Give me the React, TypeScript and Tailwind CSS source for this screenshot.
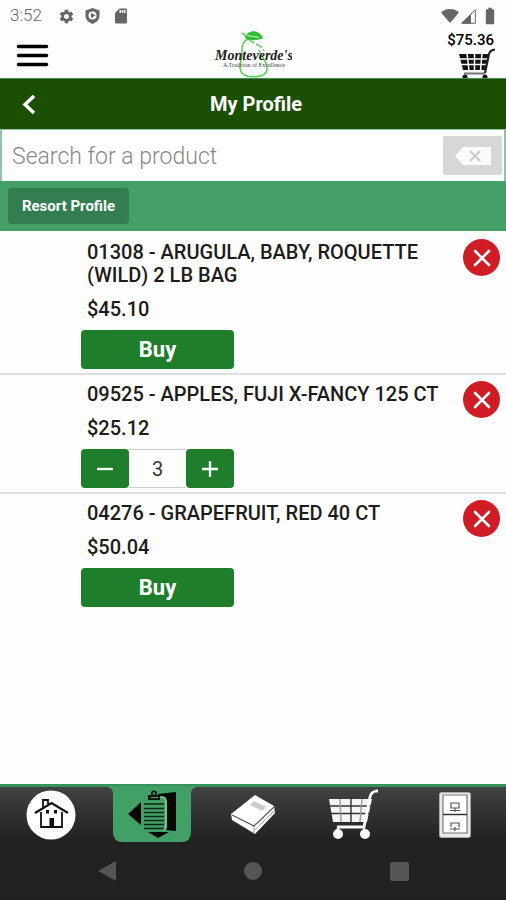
import { useState } from "react";
import { MdSettings, MdSdCard, MdBatteryFull } from "react-icons/md";

type Product = {
  code: string;
  name: string;
  price: string;
  qty: number;
};

const products: Product[] = [
  { code: "01308", name: "ARUGULA, BABY, ROQUETTE (WILD) 2 LB BAG", price: "$45.10", qty: 0 },
  { code: "09525", name: "APPLES, FUJI X-FANCY 125 CT", price: "$25.12", qty: 3 },
  { code: "04276", name: "GRAPEFRUIT, RED 40 CT", price: "$50.04", qty: 0 },
];

function StatusBar() {
  return (
    <div className="flex h-8 items-center justify-between pl-2.5 pr-1.5 text-[#666]">
      <div className="flex items-center">
        <span className="w-12 text-[17px] font-light">3:52</span>
        <MdSettings size={17} />
        <svg className="ml-2.5" width="15" height="16" viewBox="0 0 15 16">
          <path d="M7.500 0 14.500 2.500V7.500C14.500 11.500 11.500 14.500 7.500 16 3.500 14.500.5 11.500.5 7.500V2.500Z" fill="#666" />
          <circle cx="7.500" cy="7.500" r="4" fill="#fff" />
          <path d="M6 4.800 10.500 7.500 6 10.200Z" fill="#666" />
        </svg>
        <MdSdCard className="ml-3" size={18} />
      </div>
      <div className="flex items-center">
        <svg width="18" height="14" viewBox="0 0 18 14">
          <path d="M0 3.500C5-1.100 13-1.100 18 3.500L9 14Z" fill="#666" />
        </svg>
        <svg className="ml-0.5" width="15" height="15" viewBox="0 0 15 15">
          <path d="M14.300.8V14.300H.8Z" fill="#fff" stroke="#666" strokeWidth="1" />
          <path d="M10 5V14.500H.5Z" fill="#666" />
        </svg>
        <MdBatteryFull className="ml-1" size={20} />
      </div>
    </div>
  );
}

function Logo() {
  return (
    <svg width="78" height="48" viewBox="0 0 78 48" role="img" aria-label="Monteverde's">
      <g fill="none" stroke="#55d055" strokeWidth="1.500">
        <path d="M37 8C27 10 28 18 28 23 28 28 26 32 26 37 26 44 32 46.800 40 46.800 49 46.800 54 43 53 37 53 31 47 27 45 20" />
        <path d="M28 3C32 5 34 9 38 12 43 14 49 17 50 21" strokeDasharray="7 2" />
      </g>
      <path d="M31 8C33 0 44-2 49 8 43 11 35 11 31 8Z" fill="#2fbd35" />
      <path d="M33 5.500 45 7.500" stroke="#c5f2c5" strokeWidth="1.200" />
      <text x="40" y="30" textAnchor="middle" fontFamily="Liberation Serif, serif" fontStyle="italic" fontWeight="bold" fontSize="14" fill="#222">Monteverde's</text>
      <text x="40" y="37" textAnchor="middle" fontFamily="Liberation Serif, serif" fontSize="6" fill="#444">A Tradition of Excellence</text>
    </svg>
  );
}

function HeaderCart() {
  return (
    <svg width="38" height="31" viewBox="0 0 38 31">
      <path d="M1 6H31L28 22H5Z" fill="#111" />
      <path d="M0 11H33M2 16.500H32M9 5 11 23M16.500 5V23M24 5 22.500 23" stroke="#fff" strokeWidth="1.500" />
      <path d="M37 1.500Q32 2 31 6L27 25" fill="none" stroke="#222" strokeWidth="2.200" />
      <path d="M6 25.500H27" stroke="#77717a" strokeWidth="2" />
      <circle cx="7" cy="29" r="2.500" fill="#111" />
      <circle cx="27" cy="29" r="2.500" fill="#111" />
    </svg>
  );
}

function Header() {
  return (
    <header className="grid h-[46px] grid-cols-3 items-start">
      <button aria-label="Menu" className="ml-4 mt-3 w-8">
        <svg width="33" height="23" viewBox="0 0 33 23">
          <path d="M2.500 2.500H30.500M2.500 11.500H30.500M2.500 20.500H30.500" stroke="#000" strokeWidth="3.500" strokeLinecap="round" />
        </svg>
      </button>
      <div className="-mt-0.5 flex justify-center">
        <Logo />
      </div>
      <button className="flex flex-col items-end justify-self-end pr-2.5 text-[15px] leading-4 font-medium text-black">
        <span className="pr-0.5">$75.36</span>
        <HeaderCart />
      </button>
    </header>
  );
}

function Stepper({ qty, onChange }: { qty: number; onChange: (n: number) => void }) {
  return (
    <div className="flex h-[39px] w-[153px]">
      <button
        aria-label="Decrease quantity"
        onClick={() => onChange(Math.max(0, qty - 1))}
        className="flex w-12 items-center justify-center rounded bg-[#1e7e2c]"
      >
        <svg width="16" height="16" viewBox="0 0 16 16">
          <path d="M0 8H16" stroke="#fff" strokeWidth="2.300" />
        </svg>
      </button>
      <input
        aria-label="Quantity"
        value={qty}
        onChange={(e) => onChange(Number(e.target.value) || 0)}
        className="min-w-0 flex-1 border-y border-[#ccc] bg-white text-center text-[20px] text-[#333] outline-none"
      />
      <button
        aria-label="Increase quantity"
        onClick={() => onChange(qty + 1)}
        className="flex w-12 items-center justify-center rounded bg-[#1e7e2c]"
      >
        <svg width="16" height="16" viewBox="0 0 16 16">
          <path d="M0 8H16M8 0V16" stroke="#fff" strokeWidth="2.300" />
        </svg>
      </button>
    </div>
  );
}

function ProductRow({ product }: { product: Product }) {
  const [qty, setQty] = useState(product.qty);

  return (
    <li className="flex border-b-2 border-[#dedede] pt-2 pb-1 pl-[81px] pr-1.5 last:border-b-0">
      <div className="min-w-0 flex-1">
        <h2 className="pl-1.5 text-[20px] leading-[23px] font-medium text-[#1c1c1c]">
          {`${product.code} - ${product.name}`}
        </h2>
        <p className="mt-[11px] mb-[9px] pl-1.5 text-[20px] leading-[23px] font-medium text-[#1c1c1c]">{product.price}</p>
        {qty > 0 ? (
          <Stepper qty={qty} onChange={setQty} />
        ) : (
          <button onClick={() => setQty(1)} className="block h-[39px] w-[153px] rounded bg-[#1e7e2c] text-[22px] font-bold text-white">
            Buy
          </button>
        )}
      </div>
      <button
        aria-label="Remove product"
        className="-mt-0.5 ml-5 flex size-[37px] shrink-0 items-center justify-center rounded-full bg-[#d01c25]"
      >
        <svg width="18" height="18" viewBox="0 0 18 18">
          <path d="M2 2 16 16M16 2 2 16" stroke="#fff" strokeWidth="2.600" strokeLinecap="round" />
        </svg>
      </button>
    </li>
  );
}

function HomeIcon() {
  return (
    <svg width="50" height="50" viewBox="0 0 50 50">
      <circle cx="25" cy="25" r="24.500" fill="#fff" />
      <g fill="none" stroke="#111" strokeWidth="1.800">
        <path d="M9 23 25.500 13 42 23" strokeWidth="2.200" />
        <path d="M15 22V37H36V22M17 17V10H22V14" />
      </g>
      <path d="M23.500 28H28V37H23.500ZM20 20H23V23.500H20ZM28 20H31V23.500H28Z" fill="#111" />
    </svg>
  );
}

function ProfileIcon() {
  return (
    <svg width="50" height="50" viewBox="0 0 50 50">
      <path d="M1 24 14 12V35Z" fill="#050805" />
      <path d="M31 4 49 2V41L38 40V7H31Z" fill="#050805" />
      <path d="M21 42H42L31 48Z" fill="#050805" />
      <path d="M17 9H36Q40 9 40 13V37Q40 41 36 41H17Z" fill="#42a067" />
      <path d="M33 7H36Q39 8 39 11V36Q39 39 36 40" fill="none" stroke="#8cc7a2" strokeWidth="1.500" />
      <path d="M17 14H37M17 18.500H37M17 22.500H37M17 26.500H37M17 30.500H37M17 34.500H37M17 38.500H37" stroke="#0d2617" strokeWidth="1.500" />
      <path d="M21 5H33V10H21Z" fill="#08150c" />
      <circle cx="27" cy="3.500" r="2.200" fill="none" stroke="#08150c" strokeWidth="1.700" />
      <path d="M24 7.500H31" stroke="#42a067" strokeWidth="1.200" />
    </svg>
  );
}

function BookIcon() {
  return (
    <svg width="46" height="42" viewBox="0 0 46 42">
      <path d="M25 1 44 12 45 19 25 40 2 26 1 20Z" fill="#fff" />
      <path d="M2 21 24 32 44 13" fill="none" stroke="#555" strokeWidth="1.200" />
      <path d="M25 36 44 17" fill="none" stroke="#aaa" strokeWidth="1" />
      <path d="M24 32V39" stroke="#999" />
      <path d="M24 7 36 13 32 17 20 11Z" fill="#ccc" />
    </svg>
  );
}

function CartIcon() {
  return (
    <svg width="50" height="51" viewBox="0 0 50 51">
      <path d="M0 10H43L38 33H4Z" fill="#f4f4f4" />
      <path d="M0 17H42M1 24.500H40M22 9V34" stroke="#333" strokeWidth="1.400" />
      <path d="M11 10 12 33M33 10 31 33" stroke="#999" strokeWidth="1.400" />
      <path d="M49 2H47Q42 3 41 8L35 38H8" fill="none" stroke="#fff" strokeWidth="2.800" />
      <path d="M9 38 8 44M35 38V43" stroke="#fff" strokeWidth="2" />
      <circle cx="9" cy="45" r="5" fill="#fff" />
      <circle cx="36" cy="45" r="5" fill="#fff" />
    </svg>
  );
}

function CabinetIcon() {
  return (
    <svg width="32" height="46" viewBox="0 0 32 46">
      <rect x=".5" y=".5" width="31" height="45" rx="2" fill="#e9e9e9" stroke="#aaa" />
      <path d="M4 3H28V41H4Z" fill="#fff" stroke="#777" strokeWidth="1.200" />
      <path d="M4 22.500H28" stroke="#333" strokeWidth="1.500" />
      <path d="M12 11H20V16H12ZM11 18.500H21M16 16V20M12 35V31H20V35M11 37H21M16 35V39" fill="none" stroke="#555" strokeWidth="1.200" />
    </svg>
  );
}

const tabs = [
  { label: "Home", icon: <HomeIcon /> },
  { label: "My Profile", icon: <ProfileIcon />, active: true },
  { label: "Catalog", icon: <BookIcon /> },
  { label: "Cart", icon: <CartIcon /> },
  { label: "Orders", icon: <CabinetIcon /> },
];

function TabBar() {
  return (
    <nav className="grid h-[58px] grid-cols-5 border-t-[3px] border-[#36915b] bg-linear-to-b from-[#424242] to-[#212121]">
      {tabs.map((tab) => (
        <button key={tab.label} aria-label={tab.label} className="relative flex items-center justify-center">
          {tab.active && (
            <svg className="absolute -top-px left-1/2 -translate-x-1/2" width="90" height="56" viewBox="0 0 90 56">
              <path d="M0 0H90V1C86 1 84 4 84 8V46Q84 56 74 56H16Q6 56 6 46V8C6 4 4 1 0 1Z" fill="#42a067" />
            </svg>
          )}
          <span className="relative">{tab.icon}</span>
        </button>
      ))}
    </nav>
  );
}

function SystemNav() {
  return (
    <div className="grid h-[58px] grid-cols-[1fr_40px_1fr] items-center bg-[#212121]">
      <button aria-label="Back" className="justify-self-center pr-10">
        <svg className="ml-5" width="18" height="20" viewBox="0 0 18 20">
          <path d="M18 0V20L0 10Z" fill="#555" />
        </svg>
      </button>
      <button aria-label="Home screen" className="size-[18px] justify-self-center rounded-full bg-[#555]" />
      <button aria-label="Recent apps" className="ml-5 size-[19px] justify-self-center rounded-xs bg-[#555]" />
    </div>
  );
}

export default function App() {
  const [search, setSearch] = useState("");

  return (
    <div className="flex min-h-screen flex-col bg-[#fdfdfd] font-[Roboto,sans-serif]">
      <StatusBar />
      <Header />

      <div className="grid h-[51px] grid-cols-3 items-center border-t border-[#4a8a55] bg-[#1b4f04] pl-1.5">
        <button aria-label="Back" className="ml-4 w-4">
          <svg width="14" height="21" viewBox="0 0 14 21">
            <path d="M12 2 3 10.500 12 19" fill="none" stroke="#fff" strokeWidth="3.500" />
          </svg>
        </button>
        <h1 className="text-center text-[20px] font-bold whitespace-nowrap text-white">My Profile</h1>
      </div>

      <form className="flex h-[52px] items-center border-x-2 border-t border-[#8fc5a4] bg-white pl-2.5 pr-0.5">
        <input
          type="text"
          aria-label="Search for a product"
          placeholder="Search for a product"
          value={search}
          onChange={(e) => setSearch(e.target.value)}
          className="min-w-0 flex-1 pt-1 text-[23px] font-light text-black outline-none placeholder:text-[#888]"
        />
        <button
          type="button"
          aria-label="Clear search"
          onClick={() => setSearch("")}
          className="flex h-[39px] w-[59px] items-center justify-center rounded-xs bg-[#d7d7d7]"
        >
          <svg width="36" height="18" viewBox="0 0 36 18">
            <path d="M0 9 8 0H36V18H8Z" fill="#fafafa" />
            <path d="M15 4 25 14M25 4 15 14" stroke="#c9c9c9" strokeWidth="2" />
          </svg>
        </button>
      </form>

      <div className="flex h-[50px] items-center bg-[#439f67] px-2">
        <button className="h-9 w-[121px] rounded bg-[#337e51] text-[15px] font-bold text-white">Resort Profile</button>
      </div>

      <main className="flex-1 pt-0.5">
        <ul>
          {products.map((product) => (
            <ProductRow key={product.code} product={product} />
          ))}
        </ul>
      </main>

      <footer>
        <TabBar />
        <SystemNav />
      </footer>
    </div>
  );
}
